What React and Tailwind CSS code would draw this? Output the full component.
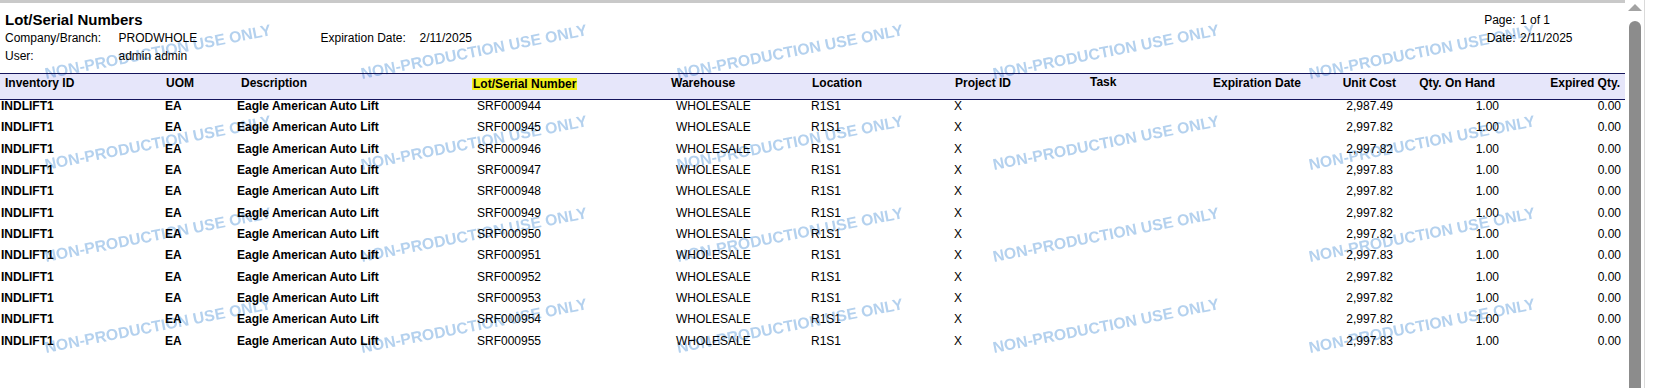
const rows = [
  ['SRF000944', '2,987.49'],
  ['SRF000945', '2,997.82'],
  ['SRF000946', '2,997.82'],
  ['SRF000947', '2,997.83'],
  ['SRF000948', '2,997.82'],
  ['SRF000949', '2,997.82'],
  ['SRF000950', '2,997.82'],
  ['SRF000951', '2,997.83'],
  ['SRF000952', '2,997.82'],
  ['SRF000953', '2,997.82'],
  ['SRF000954', '2,997.82'],
  ['SRF000955', '2,997.83'],
];

// watermark tiles: 5 across, 4 down
const marks = Array.from({ length: 20 });

const Scrollbar = () => (
  <div className="flex w-[28px] shrink-0">
    <div className="flex w-[20px] flex-col items-center border-r border-[#dadada] pt-[4px]">
      <svg width="14" height="7" viewBox="0 0 14 7" className="shrink-0">
        <path d="M7 0 L14 7 L0 7 Z" fill="#a3a3a3" />
      </svg>
      <div className="mt-[10px] w-[12px] flex-1 rounded-t-[6px] bg-[#8c8c8c]" />
    </div>
  </div>
);

const App = () => {
  return (
    <div className="flex h-[388px] w-[1653px] overflow-hidden bg-white font-['Liberation_Sans',Arial,sans-serif] text-[12px] text-black">
      <div className="relative w-[1625px] shrink-0">
        <div className="h-[3px] bg-[#c9c9c9]" />

        {/* report header */}
        <div className="flex pt-[7px]">
          <div className="w-[1484px] shrink-0">
            <div className="pl-[5px] text-[15px] font-bold leading-[19px]">Lot/Serial Numbers</div>
            <div className="flex h-[18px] items-center pl-[5px]">
              <span className="w-[113.5px] shrink-0">Company/Branch:</span>
              <span className="w-[202px] shrink-0">PRODWHOLE</span>
              <span className="w-[99px] shrink-0">Expiration Date:</span>
              <span>2/11/2025</span>
            </div>
            <div className="flex h-[18px] items-center pl-[5px]">
              <span className="w-[113.5px] shrink-0">User:</span>
              <span>admin admin</span>
            </div>
          </div>
          <div className="pt-[1px]">
            <div className="flex h-[18px] items-center">
              <span className="w-[31.5px] text-right">Page:</span>
              <span className="pl-[4.5px]">1 of 1</span>
            </div>
            <div className="flex h-[18px] items-center">
              <span className="w-[31.5px] text-right">Date:</span>
              <span className="pl-[4.5px]">2/11/2025</span>
            </div>
          </div>
        </div>

        {/* column headings */}
        <div className="mt-[8px] h-[27px] border-y border-[#15155c] bg-[#e6e6fa] font-bold">
          <div className="flex h-[18px] items-center">
            <div className="w-[166px] shrink-0 pl-[5px]">Inventory ID</div>
            <div className="w-[75px] shrink-0">UOM</div>
            <div className="w-[231px] shrink-0">Description</div>
            <div className="flex w-[199px] shrink-0 items-center">
              <span className="relative top-[1px] inline-block bg-[#f0f01c] px-[1px] leading-[12px]">
                Lot/Serial Number
              </span>
            </div>
            <div className="w-[141px] shrink-0">Warehouse</div>
            <div className="w-[143px] shrink-0">Location</div>
            <div className="w-[135px] shrink-0">Project ID</div>
            <div className="w-[120px] shrink-0 -translate-y-[1.5px]">Task</div>
            <div className="w-[91px] shrink-0 text-right">Expiration Date</div>
            <div className="w-[95px] shrink-0 text-right">Unit Cost</div>
            <div className="w-[99px] shrink-0 text-right">Qty. On Hand</div>
            <div className="w-[125px] shrink-0 text-right">Expired Qty.</div>
          </div>
        </div>

        {/* detail rows */}
        <div>
          {rows.map(([lot, cost]) => (
            <div key={lot} className="flex h-[21.33px] leading-[12px]">
              <div className="w-[165px] shrink-0 pl-[1px] font-bold">INDLIFT1</div>
              <div className="w-[72px] shrink-0 font-bold">EA</div>
              <div className="w-[240px] shrink-0 font-bold">Eagle American Auto Lift</div>
              <div className="w-[199px] shrink-0">{lot}</div>
              <div className="w-[135px] shrink-0">WHOLESALE</div>
              <div className="w-[143px] shrink-0">R1S1</div>
              <div className="w-[346px] shrink-0">X</div>
              <div className="w-[93px] shrink-0 text-right">{cost}</div>
              <div className="w-[106px] shrink-0 text-right">1.00</div>
              <div className="w-[122px] shrink-0 text-right">0.00</div>
            </div>
          ))}
        </div>

        {/* watermark, multiplied so the black text stays on top */}
        <div className="pointer-events-none absolute left-[45.5px] top-[66px] grid auto-rows-[91.3px] grid-cols-[repeat(5,316px)] mix-blend-multiply">
          {marks.map((_, i) => (
            <div key={i}>
              <span className="block origin-[0_13.4px] -rotate-[11deg] whitespace-nowrap text-[15.8px] font-bold leading-none text-[#b4d1ee]">
                NON-PRODUCTION USE ONLY
              </span>
            </div>
          ))}
        </div>
      </div>

      <Scrollbar />
    </div>
  );
};

export default App;
